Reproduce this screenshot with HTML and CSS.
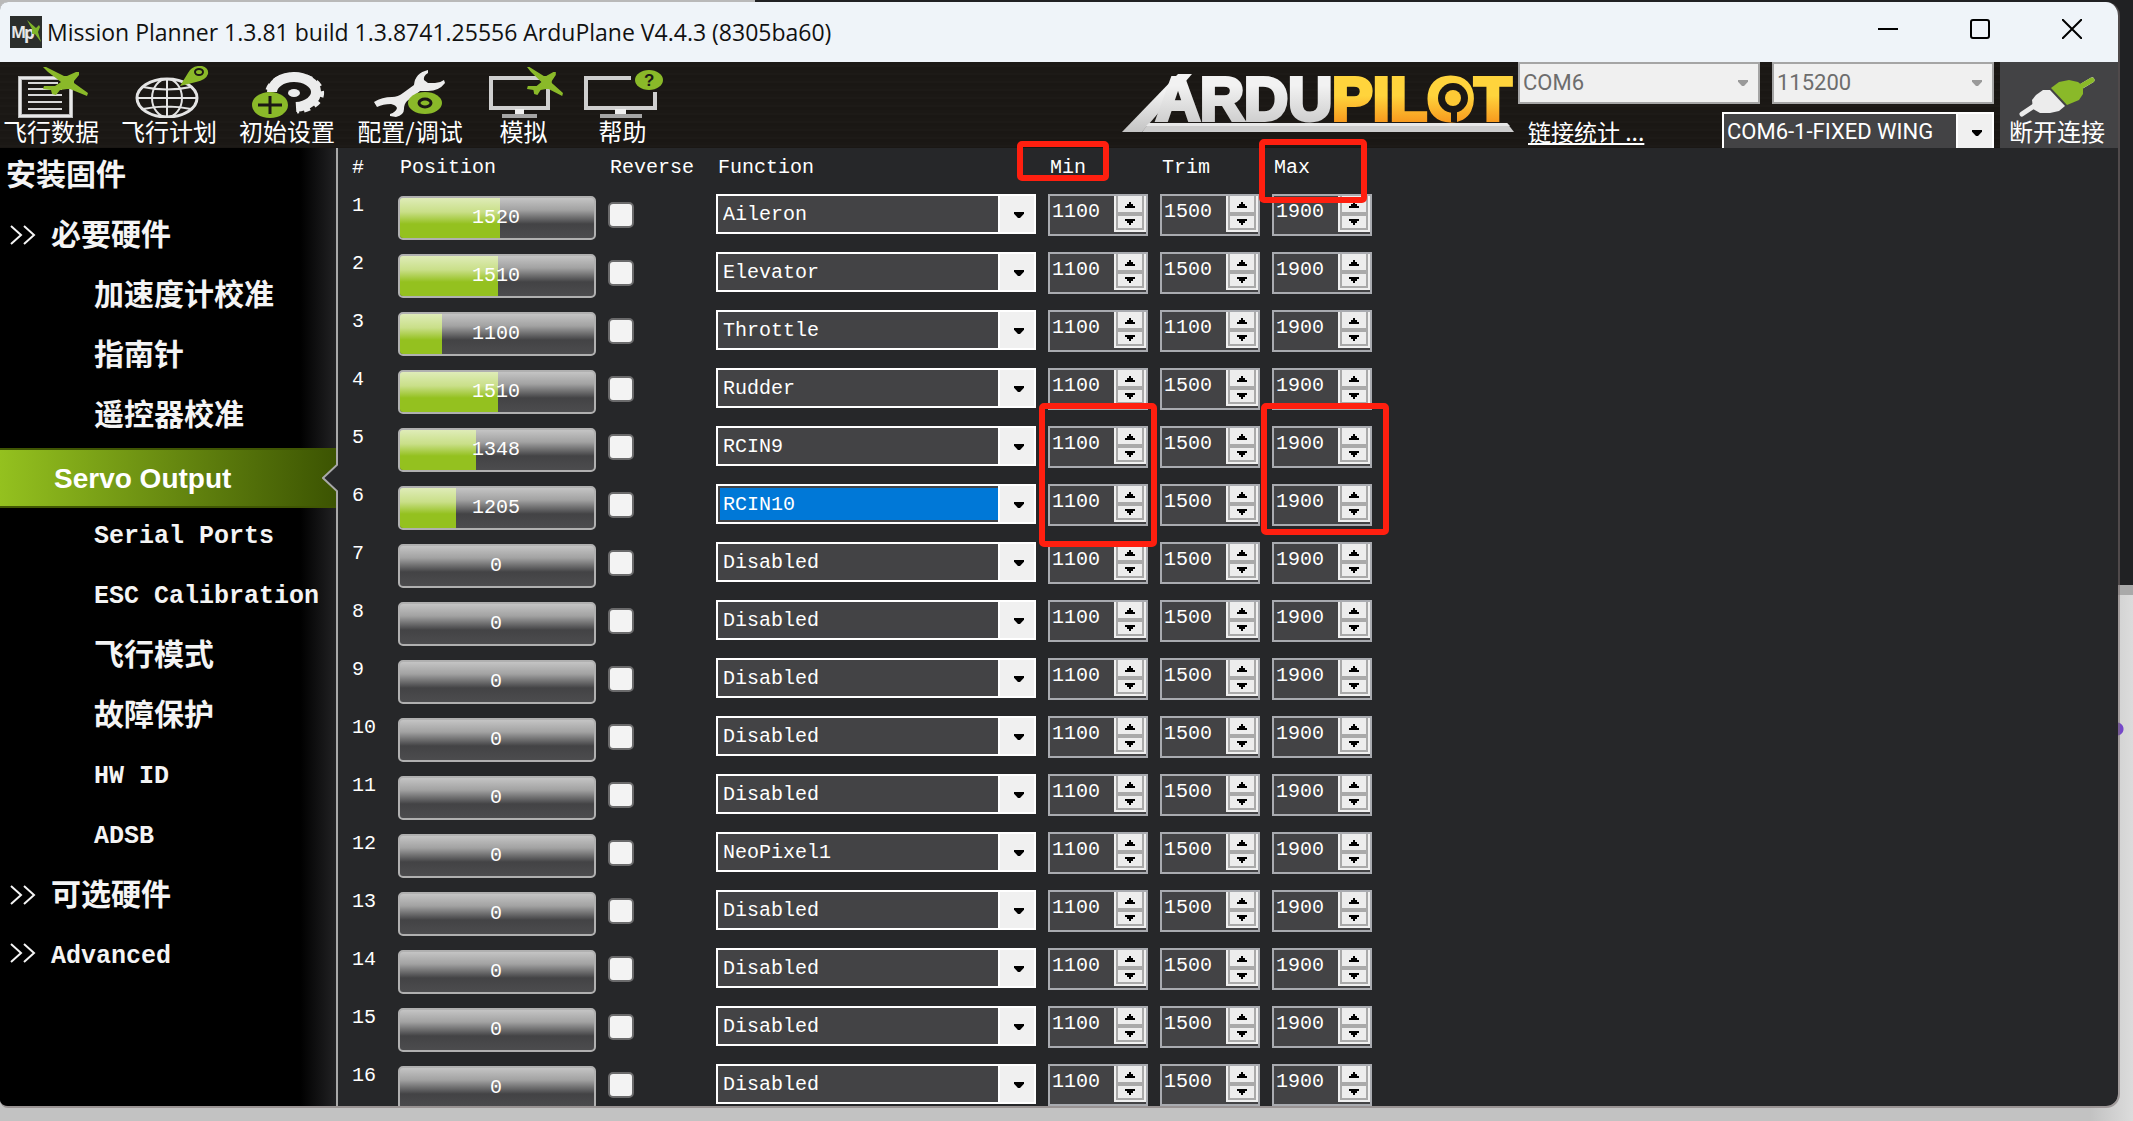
FILE: index.html
```html
<!DOCTYPE html>
<html lang="zh-CN">
<head>
  <meta charset="UTF-8">
  <title>Mission Planner</title>
  <meta name="viewport" content="width=device-width, initial-scale=1">
  <link rel="stylesheet" href="styles.css">
</head>
<body>
  <div class="window">
    <header class="titlebar">
      <svg class="app-icon" viewBox="0 0 32 32" aria-hidden="true">
        <rect width="32" height="32" fill="#2b2e2c"/>
        <text x="1" y="22" font-size="16" font-weight="bold" fill="#e6e6e6">M</text>
        <text x="14" y="23" font-size="17" font-weight="bold" fill="#e6e6e6">p</text>
        <path d="M17 4l9 8 3-3 1 2-2 5 3 10-6-8-3 0 0-5z" fill="#7fb52a"/>
      </svg>
      <h1 class="title">Mission Planner 1.3.81 build 1.3.8741.25556 ArduPlane V4.4.3 (8305ba60)</h1>
      <div class="window-buttons">
        <button aria-label="Minimize"><svg viewBox="0 0 20 20"><path d="M0 10h20"/></svg></button>
        <button aria-label="Maximize"><svg viewBox="0 0 20 20"><rect x="1" y="1" width="18" height="18" rx="2"/></svg></button>
        <button aria-label="Close"><svg viewBox="0 0 20 20"><path d="M0 0l20 20M20 0L0 20"/></svg></button>
      </div>
    </header>

    <div class="toolbar">
      <nav class="tools">
        <button class="tool">
          <svg viewBox="11 66 80 52">
            <rect x="20" y="78" width="51" height="38" fill="none" stroke="#b9b9b9" stroke-width="4"/>
            <rect x="20" y="78" width="51" height="38" fill="none" stroke="#e8e8e8" stroke-width="2"/>
            <path d="M28 83h30M28 89h34M28 95h34M28 102h34M28 109h34" stroke="#d8d8d8" stroke-width="2"/>
            <path id="plane" d="M43 67l3 0 18 9 3 0 9-4 3 0 0 3-5 6 0 2 14 10-1 3-17-7-3 0-7 1-4 5-4-1-1-4-8-1 1-3 11 0 6-4-13-10z" fill="#8ab929"/>
          </svg>
          <span>飞行数据</span>
        </button>
        <button class="tool">
          <svg viewBox="129 66 80 52">
            <g fill="none" stroke="#e4e4e4" stroke-width="2">
              <ellipse cx="167" cy="98" rx="30" ry="19" stroke-width="3"/>
              <ellipse cx="167" cy="98" rx="15" ry="19"/>
              <path d="M167 79v38M137 98h60M143 87q24 5 48 0M143 109q24-5 48 0"/>
            </g>
            <path d="M180 86l8-13q4-8 14-7 7 2 6 8-2 6-12 8z" fill="#8ab929"/>
            <ellipse cx="199" cy="72" rx="4" ry="3" fill="#8ab929" stroke="#1b1815" stroke-width="2"/>
          </svg>
          <span>飞行计划</span>
        </button>
        <button class="tool">
          <svg viewBox="247 66 80 52">
            <g fill="none" stroke="#ececec">
              <path d="M272 92A22 15 0 1 1 296 107" stroke-width="10"/>
              <path d="M268 90A27 18 0 1 1 297 111" stroke-width="5" stroke-dasharray="6 5"/>
            </g>
            <ellipse cx="294" cy="93" rx="6" ry="4" fill="#ececec"/>
            <ellipse cx="270" cy="105" rx="18" ry="13" fill="#8ab929"/>
            <path d="M258 105h24M270 96v18" stroke="#1b1815" stroke-width="3"/>
          </svg>
          <span>初始设置</span>
        </button>
        <button class="tool wide">
          <svg viewBox="370 66 80 52">
            <path d="M374 102q8-5 18-5 6 0 11-4l11-8q1-12 14-15l0 3q-5 3-4 7l4 3 7 0q5 0 9-3l1 3q-6 8-17 8l-8 0-13 10q-3 3-3 8 0 6-8 8l-6-1 0-2q6-2 7-6-1-3-6-4-8 0-14 3z" fill="#ececec"/>
            <ellipse cx="425" cy="103" rx="17" ry="11" fill="#8ab929"/>
            <ellipse cx="425" cy="103" rx="6" ry="4" fill="#8ab929" stroke="#1b1815" stroke-width="3"/>
          </svg>
          <span>配置/调试</span>
        </button>
        <button class="tool narrow">
          <svg viewBox="483 66 80 52">
            <rect x="490" y="78" width="57" height="30" fill="none" stroke="#cfcfcf" stroke-width="4"/>
            <path d="M514 109h9v5h-9z" fill="#f0f0f0"/>
            <path d="M501 116h35" stroke="#a5a5a5" stroke-width="4"/>
            <use href="#plane" transform="translate(491.6 0) scale(.8 1)"/>
          </svg>
          <span>模拟</span>
        </button>
        <button class="tool narrow">
          <svg viewBox="582 66 80 52">
            <path d="M630 78H585v30h69V92" fill="none" stroke="#cfcfcf" stroke-width="4"/>
            <path d="M614 109h11v5h-11z" fill="#f0f0f0"/>
            <path d="M599 116h42" stroke="#a5a5a5" stroke-width="4"/>
            <ellipse cx="648" cy="80" rx="14" ry="10" fill="#8ab929"/>
            <text x="643" y="86" font-size="17" font-weight="bold" fill="#1b1815">?</text>
          </svg>
          <span>帮助</span>
        </button>
      </nav>

      <svg class="logo" viewBox="0 -8 392 78" role="img" aria-label="ArduPilot">
        <defs>
          <linearGradient id="silver" x1="0" y1="0" x2="0" y2="1">
            <stop offset=".3" stop-color="#f2f2f2"/>
            <stop offset="1" stop-color="#c4c4c4"/>
          </linearGradient>
          <linearGradient id="gold" x1="0" y1="0" x2="0" y2="1">
            <stop offset=".45" stop-color="#ffd43c"/>
            <stop offset=".85" stop-color="#f7981d"/>
          </linearGradient>
        </defs>
        <path d="M0 60L56 2h14L20 60z" fill="url(#silver)"/>
        <path d="M27 51h358l7 9H20z" fill="#cdcdcd"/>
        <path d="M27 51h358l3 3H24z" fill="#e8e8e8"/>
        <text class="logo-text" x="34" y="48" fill="url(#silver)" stroke="url(#silver)">ARDU</text>
        <text class="logo-text" x="210" y="48" fill="url(#gold)" stroke="url(#gold)">PILOT</text>
        <circle cx="331" cy="26" r="15" fill="#1b1815"/>
        <path d="M329 36h6v14h-6z" fill="#1b1815"/>
        <circle cx="331" cy="26" r="8" fill="#fdc935"/>
      </svg>

      <div class="connection">
        <div class="connection-row">
          <div class="combo light port"><select aria-label="Port" disabled><option>COM6</option></select></div>
          <div class="combo light baud"><select aria-label="Baud rate" disabled><option>115200</option></select></div>
        </div>
        <div class="connection-row">
          <a class="stats" href="#">链接统计 ...</a>
          <div class="combo vehicle"><select aria-label="Vehicle"><option>COM6-1-FIXED WING</option></select></div>
        </div>
      </div>

      <button class="tool disconnect">
        <svg viewBox="2019 66 80 52">
          <path d="M2024 114l12-8M2084 86l10-6" stroke-width="5" stroke-linecap="round" stroke="#ececec"/>
          <path d="M2082 87l12-7" stroke-width="5" stroke-linecap="round" stroke="#8ab929"/>
          <path d="M2034 100l4-5 7-5h7l15 16-6 5-9 2h-10l-7-4z" fill="#ececec"/>
          <path d="M2053 88l8-6 10-2 9 2 5 4 0 8-4 6-12 5z" fill="#8ab929"/>
        </svg>
        <span>断开连接</span>
      </button>
    </div>

    <div class="body">
      <nav class="sidebar">
        <a href="#">安装固件</a>
        <a href="#" class="group"><svg viewBox="0 0 26 20"><path d="M1 1l10 9-10 9M14 1l10 9-10 9"/></svg>必要硬件</a>
        <a href="#" class="sub">加速度计校准</a>
        <a href="#" class="sub">指南针</a>
        <a href="#" class="sub">遥控器校准</a>
        <a href="#" class="active">Servo Output<svg class="notch" viewBox="0 0 16 28"><path d="M16 0L1 14l15 14"/></svg></a>
        <a href="#" class="sub latin">Serial Ports</a>
        <a href="#" class="sub latin">ESC Calibration</a>
        <a href="#" class="sub">飞行模式</a>
        <a href="#" class="sub">故障保护</a>
        <a href="#" class="sub latin">HW ID</a>
        <a href="#" class="sub latin">ADSB</a>
        <a href="#" class="group"><svg viewBox="0 0 26 20"><path d="M1 1l10 9-10 9M14 1l10 9-10 9"/></svg>可选硬件</a>
        <a href="#" class="group latin"><svg viewBox="0 0 26 20"><path d="M1 1l10 9-10 9M14 1l10 9-10 9"/></svg>Advanced</a>
      </nav>

      <main class="content">
        <table class="servos">
          <thead>
            <tr>
              <th class="col-num">#</th>
              <th class="col-position">Position</th>
              <th class="col-reverse">Reverse</th>
              <th class="col-function">Function</th>
              <th class="col-limit">Min</th>
              <th class="col-limit">Trim</th>
              <th class="col-limit">Max</th>
            </tr>
          </thead>
          <tbody id="servoRows"></tbody>
        </table>
        <div class="mark mark-min"></div>
        <div class="mark mark-max"></div>
        <div class="mark mark-min-values"></div>
        <div class="mark mark-max-values"></div>
      </main>
    </div>
  </div>
  <script src="script.js"></script>
</body>
</html>
```

FILE: styles.css
```css
* {
  box-sizing: border-box;
}
html, body {
  margin: 0;
  height: 100%;
  overflow: hidden;
}
body {
  padding: 2px 13px 13px 0;
  font-family: "Liberation Mono", "Noto Sans CJK SC", monospace;
  font-size: 20px;
  color: #fff;
  /* desktop behind the window */
  background:
    radial-gradient(circle at calc(100% - 16px) 729px, #7548c8 6px, transparent 7px),
    linear-gradient(#b9b9b9, #b9b9b9) 0 0 / 755px 20px no-repeat,
    linear-gradient(#202123, #202123) 100% 0 / 100% 585px no-repeat,
    linear-gradient(#a9a9a9, #a9a9a9) 100% 585px / 40px 10px no-repeat,
    linear-gradient(90deg, #c2c2c2 98%, #dcdcdc);
}
button, select, input {
  font: inherit;
  color: inherit;
}
button {
  border: 0;
  padding: 0;
  background: none;
}
a {
  color: inherit;
}
.window {
  display: flex;
  flex-direction: column;
  height: 100%;
  overflow: hidden;
  border: solid rgba(120, 110, 110, 0.55);
  border-width: 0 2px 2px 0;
  border-radius: 8px 14px 14px 8px;
  background: #262729;
  background-clip: padding-box;
}

/* title bar */
.titlebar {
  display: flex;
  align-items: center;
  height: 60px;
  padding-left: 10px;
  background: #eff4f9;
  color: #111;
  flex: none;
}
.app-icon {
  width: 32px;
  height: 32px;
  font-family: "Open Sans", sans-serif;
}
.title {
  margin: 0 0 0 5px;
  font: 23px "Open Sans", sans-serif;
}
.window-buttons {
  display: flex;
  margin-left: auto;
}
.window-buttons button {
  width: 92px;
  height: 60px;
}
.window-buttons svg {
  width: 20px;
  height: 20px;
  fill: none;
  stroke: #000;
  stroke-width: 2;
}

/* toolbar */
.toolbar {
  display: flex;
  height: 86px;
  flex: none;
  overflow: hidden;
  background: repeating-linear-gradient(#1b1815 0 3px, #1d1a17 3px 5px, #1a1714 5px 8px);
}
.tools {
  display: flex;
  gap: 16px;
}
.tool {
  display: flex;
  flex-direction: column;
  align-items: center;
  width: 102px;
  padding-top: 4px;
  font: 24px/26px "Noto Sans CJK SC", sans-serif;
  white-space: nowrap;
}
.tool.wide {
  width: 112px;
}
.tool.narrow {
  width: 83px;
}
.tool svg {
  width: 80px;
  height: 52px;
  font-family: "Liberation Sans", sans-serif;
}
.logo {
  width: 392px;
  height: 78px;
  margin: 2px 4px 0 auto;
}
.logo-text {
  font: bold 61px "Liberation Sans", sans-serif;
  stroke-width: 4px;
}
.connection {
  display: flex;
  flex-direction: column;
  gap: 8px;
  width: 476px;
  margin-right: 6px;
  font: 22px "Roboto", "Noto Sans CJK SC", sans-serif;
}
.connection-row {
  display: flex;
  justify-content: space-between;
}
.stats {
  padding-left: 10px;
  font: 23px/38px "Noto Sans CJK SC", sans-serif;
}
.disconnect {
  width: 118px;
  padding-right: 4px;
  background: #434345;
}

/* drop-downs */
.combo {
  position: relative;
  height: 40px;
  border: 2px solid #fff;
  background: #434345;
}
.combo select {
  display: block;
  width: 100%;
  height: 100%;
  padding: 2px 38px 0 5px;
  border: 0;
  border-radius: 0;
  appearance: none;
  background: none;
  outline: 0;
}
.combo option {
  background: #434345;
}
.combo::before {
  content: "";
  position: absolute;
  top: 0;
  right: 0;
  bottom: 0;
  width: 34px;
  border-left: 2px solid #fff;
  background: #f0f0f0;
  pointer-events: none;
}
.combo::after {
  content: "";
  position: absolute;
  top: 16px;
  right: 10px;
  width: 10px;
  height: 6px;
  background: #000;
  clip-path: polygon(0 0, 100% 0, 100% 30%, 60% 100%, 40% 100%, 0 30%);
  pointer-events: none;
}
.combo.light {
  height: 42px;
  border-color: #a5a5a5;
  background: #f0f0f0;
}
.combo.light::before {
  display: none;
}
.combo.light::after {
  background: #9a9a9a;
}
.combo.light select {
  padding: 0 38px 2px 3px;
  opacity: 1;
  color: #6d6d6d;
}
.vehicle select {
  padding: 0 38px 2px 3px;
}
.port {
  width: 242px;
}
.baud {
  width: 222px;
}
.vehicle {
  width: 272px;
}
.combo.focused select {
  background: #0078d7;
  box-shadow: inset 0 0 0 2px #434345;
}

/* sidebar */
.body {
  display: flex;
  flex: 1;
  min-height: 0;
}
.sidebar {
  width: 338px;
  flex: none;
  border-right: 2px solid #a9a9a9;
  background: linear-gradient(90deg, #000 300px, #222224);
  font: bold 30px/48px "Noto Sans CJK SC", sans-serif;
}
.sidebar a {
  display: block;
  height: 60px;
  padding-left: 6px;
  color: #f4f4f4;
  text-decoration: none;
  white-space: nowrap;
}
.sidebar .sub {
  padding-left: 94px;
}
.sidebar .group {
  padding-left: 10px;
}
.sidebar .group svg {
  width: 26px;
  height: 20px;
  margin-right: 15px;
  fill: none;
  stroke: #f4f4f4;
  stroke-width: 2;
}
.sidebar .latin {
  font-family: "Liberation Mono", monospace;
  font-size: 25px;
  line-height: 58px;
}
.sidebar .active {
  position: relative;
  padding-left: 54px;
  border: solid #405603;
  border-width: 2px 0;
  background: linear-gradient(90deg, #94c11f, #3c5402);
  color: #fff;
  font: bold 28px/58px "Liberation Sans", sans-serif;
}
.notch {
  position: absolute;
  right: -2px;
  top: 14px;
  width: 16px;
  height: 28px;
  fill: #262729;
  stroke: #a9a9a9;
  stroke-width: 2;
}

/* servo table */
.content {
  position: relative;
  flex: 1;
}
.servos {
  table-layout: fixed;
  width: 1046px;
  border-collapse: collapse;
}
.servos th {
  height: 46px;
  padding: 0 0 8px 2px;
  font-weight: normal;
  text-align: left;
}
.servos td {
  height: 58px;
  padding: 0;
  vertical-align: top;
  line-height: 24px;
}
.servos .col-num {
  width: 60px;
  padding-left: 14px;
}
.servos .col-position {
  width: 210px;
}
.servos .col-reverse {
  width: 108px;
}
.servos .col-function {
  width: 332px;
}
.servos .col-limit {
  width: 112px;
}
.servos .bar {
  position: relative;
  width: 198px;
  height: 44px;
  margin-top: 2px;
  padding-right: 2px;
  overflow: hidden;
  border: 2px solid #b0b0b0;
  border-radius: 5px;
  background: linear-gradient(#c4c4c4, #a2a2a2 30%, #434345 65%, #4c4c4e);
  line-height: 40px;
  text-align: center;
}
.bar-fill {
  position: absolute;
  inset: 0 auto 0 0;
  background: linear-gradient(#dfecb8, #c9df88 35%, #94c11f 65%, #94c11f);
}
.bar-value {
  position: relative;
}
.reverse {
  display: block;
  width: 26px;
  height: 26px;
  margin: 8px 0 0;
  appearance: none;
  border: 2px solid #6a6a6b;
  border-radius: 5px;
  background: #f3f3f3;
}
.servos .combo {
  width: 320px;
}
.spin {
  display: flex;
  width: 100px;
  height: 42px;
  border: 2px solid #a9abb0;
  background: #434345;
}
.spin input {
  width: 64px;
  height: 30px;
  padding: 0 0 0 2px;
  border: 0;
  outline: 0;
  background: none;
}
.spin-buttons {
  display: flex;
  flex-direction: column;
  gap: 4px;
  width: 32px;
  height: 36px;
  border: solid #f0f0f0;
  border-width: 0 2px 2px;
  background: #a9a9a9;
  padding: 0 2px 2px;
}
.spin-buttons button {
  display: flex;
  align-items: center;
  justify-content: center;
  height: 12px;
  background: #ededed;
}
.spin-buttons .up {
  height: 16px;
  padding-top: 2px;
}
.spin-buttons svg {
  width: 10px;
  height: 6px;
}

/* red highlights */
.mark {
  position: absolute;
  border: 6px solid #ff1f0f;
  border-radius: 5px;
  pointer-events: none;
}
.mark-min {
  left: 679px;
  top: -7px;
  width: 92px;
  height: 40px;
}
.mark-max {
  left: 921px;
  top: -9px;
  width: 108px;
  height: 64px;
}
.mark-min-values {
  left: 701px;
  top: 255px;
  width: 118px;
  height: 144px;
}
.mark-max-values {
  left: 923px;
  top: 255px;
  width: 128px;
  height: 132px;
}
```

FILE: script.js
```js
const servos = [
  { position: 1520, fn: 'Aileron' },
  { position: 1510, fn: 'Elevator' },
  { position: 1100, fn: 'Throttle', trim: 1100 },
  { position: 1510, fn: 'Rudder' },
  { position: 1348, fn: 'RCIN9' },
  { position: 1205, fn: 'RCIN10', focused: true },
  {}, {}, {}, {}, {},
  { fn: 'NeoPixel1' },
  {}, {}, {}, {}
];

// the bars run from 800 to 2200
function percent(value) {
  return Math.max(0, (value - 800) / 14);
}

function spin(label, value) {
  return `<td><div class="spin">
    <input type="text" inputmode="numeric" aria-label="${label}" value="${value}">
    <div class="spin-buttons">
      <button class="up" aria-label="${label} up"><svg viewBox="0 0 10 6"><path d="M4 0h2v2h2v2h2v2H0V4h2V2h2z"/></svg></button>
      <button class="down" aria-label="${label} down"><svg viewBox="0 0 10 6"><path d="M0 0h10v2H8v2H6v2H4V4H2V2H0z"/></svg></button>
    </div>
  </div></td>`;
}

document.getElementById('servoRows').innerHTML = servos.map((servo, i) => {
  const n = i + 1;
  const position = servo.position || 0;
  return `<tr>
    <td class="col-num">${n}</td>
    <td><div class="bar"><div class="bar-fill" style="width:${percent(position)}%"></div><span class="bar-value">${position}</span></div></td>
    <td><input type="checkbox" class="reverse" aria-label="Reverse ${n}"></td>
    <td><div class="combo ${servo.focused ? 'focused' : ''}"><select aria-label="Function ${n}"><option>${servo.fn || 'Disabled'}</option></select></div></td>
    ${spin('Min ' + n, 1100)}
    ${spin('Trim ' + n, servo.trim || 1500)}
    ${spin('Max ' + n, 1900)}
  </tr>`;
}).join('');
```
